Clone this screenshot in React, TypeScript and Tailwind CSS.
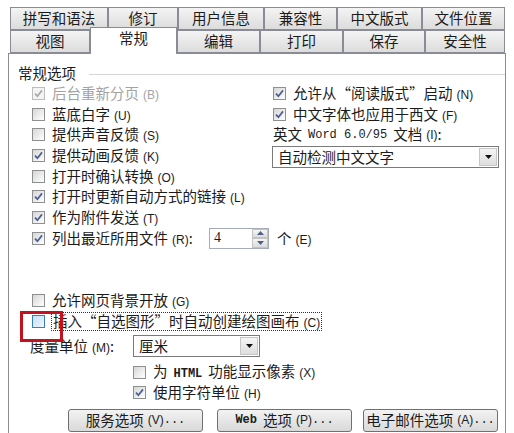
import type { ReactNode } from 'react';

const CJK = "font-['Noto_Sans_CJK_SC',sans-serif]";

function Key({ k }: { k: string }) {
  return <span className="font-['Liberation_Sans',sans-serif] text-[12px] ml-[4px]">({k})</span>;
}

function Box({ checked, disabled, hot }: { checked?: boolean; disabled?: boolean; hot?: boolean }) {
  const look = hot
    ? 'border-[#3c7fb1] bg-gradient-to-br from-[#c4e0f5] to-[#eef7fd]'
    : disabled
      ? 'border-[#bdbdbd] bg-[#f4f4f4]'
      : 'border-[#8e8f8f] bg-gradient-to-br from-[#d6d6d6] to-white';
  return (
    <span className={`w-[13px] h-[13px] shrink-0 border flex items-center justify-center ${look}`}>
      {checked && (
        <svg width="9" height="9" viewBox="0 0 9 9">
          <path d="M1 4.6 L3.4 7.2 L8 1.4" fill="none" stroke={disabled ? '#a9a9a9' : '#4b5f93'} strokeWidth="1.7" />
        </svg>
      )}
    </span>
  );
}

function Row({ checked, disabled, k, children }: { checked?: boolean; disabled?: boolean; k: string; children: ReactNode }) {
  return (
    <div className={`h-[20.7px] flex items-center gap-[7px] ${disabled ? 'text-[#a3a3a3]' : ''}`}>
      <Box checked={checked} disabled={disabled} />
      <span className="whitespace-nowrap">
        {children}
        <Key k={k} />
      </span>
    </div>
  );
}

function Arrow() {
  return (
    <span className="w-[18px] h-[18px] mr-[1px] border border-[#c6c6c6] bg-gradient-to-b from-[#f5f5f5] to-[#dedede] flex items-center justify-center">
      <svg width="7" height="4" viewBox="0 0 7 4">
        <path d="M0 0 H7 L3.5 4 Z" fill="#111" />
      </svg>
    </span>
  );
}

function Tab({ w, label, active }: { w: number; label: string; active?: boolean }) {
  return (
    <div
      style={{ width: w }}
      className={
        active
          ? 'h-[27px] -mt-[3px] -mb-[1px] relative z-10 bg-white border border-b-0 border-[#898c95] flex items-start justify-center pt-[3px]'
          : 'h-[23px] border border-[#898c95] bg-gradient-to-b from-[#f4f4f4] to-[#dcdcdc] flex items-center justify-center'
      }
    >
      {label}
    </div>
  );
}

function Btn({ children }: { children: ReactNode }) {
  return (
    <div className="h-[23px] w-[135px] rounded-[3px] border border-[#707070] bg-gradient-to-b from-[#f3f3f3] to-[#d9d9d9] flex items-center justify-center whitespace-nowrap">
      {children}
    </div>
  );
}

export default function App() {
  return (
    <div className={`w-[514px] h-[433px] overflow-hidden relative bg-white text-[14.5px] leading-none text-[#1b1b1b] ${CJK}`}>
      <div className="pt-[7px] pl-[10px]">
        <div className="flex">
          <Tab w={98} label="拼写和语法" />
          <Tab w={70} label="修订" />
          <Tab w={86} label="用户信息" />
          <Tab w={73} label="兼容性" />
          <Tab w={85} label="中文版式" />
          <Tab w={83} label="文件位置" />
        </div>
        <div className="flex">
          <Tab w={80} label="视图" />
          <Tab w={87} label="常规" active />
          <Tab w={83} label="编辑" />
          <Tab w={83} label="打印" />
          <Tab w={82} label="保存" />
          <Tab w={80} label="安全性" />
        </div>
      </div>

      <div className="ml-[8px] w-[498px] h-[400px] border border-[#8c8c8c] bg-white">
        <div className="mt-[9px] ml-[9px] h-[20px] flex items-center">
          <span>常规选项</span>
          <div className="flex-1 ml-[13px] mt-[3px] h-[2px] border-t border-[#d5d5d5] border-b border-b-white" />
        </div>

        <div className="flex items-start">
          <div className="w-[241px] pl-[23px]">
            <Row checked disabled k="B">后台重新分页</Row>
            <Row k="U">蓝底白字</Row>
            <Row k="S">提供声音反馈</Row>
            <Row checked k="K">提供动画反馈</Row>
            <Row k="O">打开时确认转换</Row>
            <Row checked k="L">打开时更新自动方式的链接</Row>
            <Row checked k="T">作为附件发送</Row>
            <div className="h-[20.7px] flex items-center gap-[7px]">
              <Box checked />
              <span className="w-[150px] shrink-0 whitespace-nowrap">
                列出最近所用文件<Key k="R" />:
              </span>
              <div className="h-[21px] flex border border-[#a5acb5] bg-white">
                <span className="w-[42px] pl-[4px] flex items-center font-['Liberation_Serif',serif] text-[14px]">4</span>
                <div className="w-[16px] flex flex-col">
                  <span className="flex-1 border border-[#c3c3c3] bg-gradient-to-b from-[#f5f5f5] to-[#dcdcdc] flex items-center justify-center">
                    <svg width="7" height="4" viewBox="0 0 7 4"><path d="M0 4 H7 L3.5 0 Z" fill="#4d6185" /></svg>
                  </span>
                  <span className="flex-1 border border-[#c3c3c3] bg-gradient-to-b from-[#f5f5f5] to-[#dcdcdc] flex items-center justify-center">
                    <svg width="7" height="4" viewBox="0 0 7 4"><path d="M0 0 H7 L3.5 4 Z" fill="#4d6185" /></svg>
                  </span>
                </div>
              </div>
              <span className="ml-[1px] whitespace-nowrap">
                个<Key k="E" />
              </span>
            </div>
          </div>

          <div className="flex-1 pl-[23px]">
            <Row checked k="N">允许从“阅读版式”启动</Row>
            <Row checked k="F">中文字体也应用于西文</Row>
            <div className="h-[20.7px] flex items-center whitespace-nowrap">
              英文<span className="font-['Liberation_Mono',monospace] text-[12px] mx-[6px]">Word 6.0/95</span>文档<Key k="I" />:
            </div>
            <div className="mt-[1px] -ml-[1px] w-[227px] h-[22px] border border-[#7a7a7a] bg-white flex items-center justify-between">
              <span className="pl-[5px]">自动检测中文文字</span>
              <Arrow />
            </div>
          </div>
        </div>

        <div className="pl-[23px] mt-[42px]">
          <Row k="G">允许网页背景开放</Row>
          <div className="h-[20px] flex items-center gap-[7px]">
            <Box hot />
            <span className="whitespace-nowrap outline-1 outline-dotted outline-[#333] px-[1px] py-[1px]">
              插入“自选图形”时自动创建绘图画布<Key k="C" />
            </span>
          </div>
        </div>

        <div className="mt-[4px] pl-[21px] h-[22px] flex items-center">
          <span className="w-[103px] whitespace-nowrap">
            度量单位<Key k="M" />:
          </span>
          <div className="w-[127px] h-[22px] border border-[#7a7a7a] bg-white flex items-center justify-between">
            <span className="pl-[5px]">厘米</span>
            <Arrow />
          </div>
        </div>

        <div className="pl-[124px] mt-[5px]">
          <div className="h-[20px] flex items-center gap-[7px]">
            <Box />
            <span className="whitespace-nowrap">
              为<span className="font-['Liberation_Mono',monospace] text-[12px] font-bold mx-[6px]">HTML</span>功能显示像素<Key k="X" />
            </span>
          </div>
          <Row checked k="H">使用字符单位</Row>
        </div>

        <div className="mt-[6px] pl-[59px] flex">
          <Btn>
            服务选项<Key k="V" />
            <span className="font-['Liberation_Mono',monospace] text-[12px]">...</span>
          </Btn>
          <div className="ml-[14px]">
            <Btn>
              <span className="font-['Liberation_Mono',monospace] text-[12px] font-bold mr-[6px]">Web</span>选项<Key k="P" />
              <span className="font-['Liberation_Mono',monospace] text-[12px]">...</span>
            </Btn>
          </div>
          <div className="ml-[11px]">
            <Btn>
              电子邮件选项<Key k="A" />
              <span className="font-['Liberation_Mono',monospace] text-[12px]">...</span>
            </Btn>
          </div>
        </div>
      </div>

      <div className="absolute z-20 left-[20px] top-[311px] w-[43px] h-[31px] border-[3px] border-[#c3121d]" />
    </div>
  );
}
